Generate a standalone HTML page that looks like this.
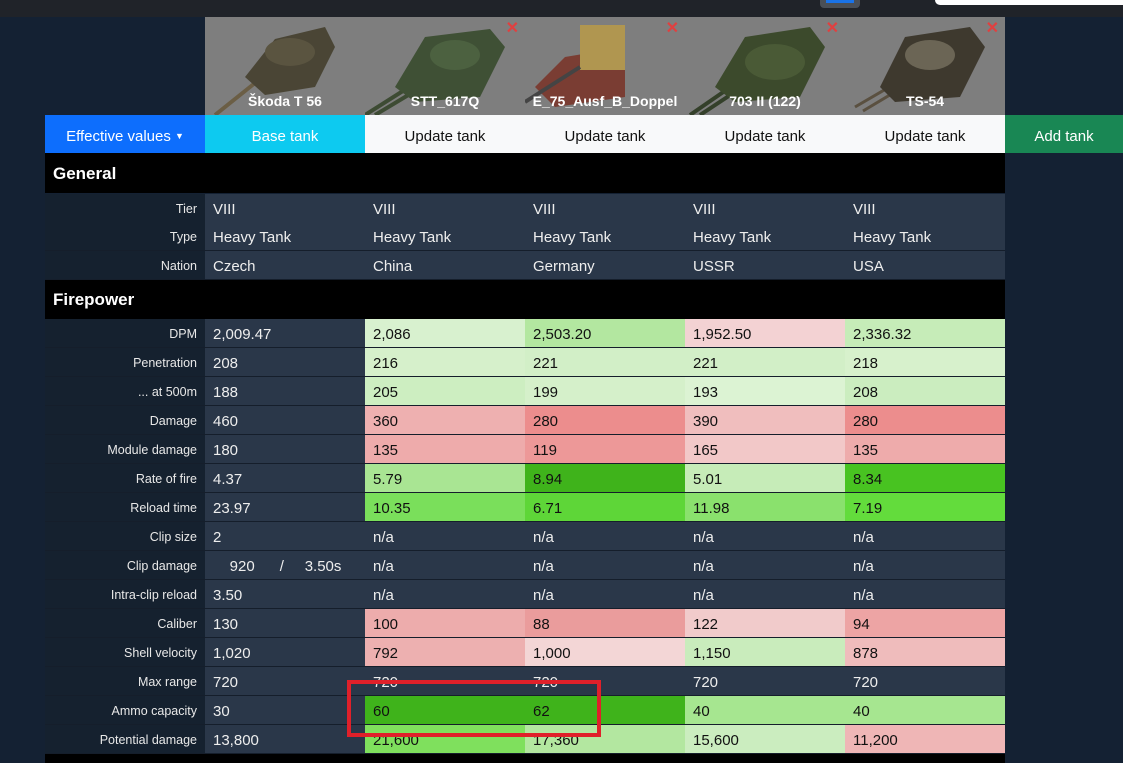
<!DOCTYPE html>
<html><head><meta charset="utf-8">
<style>
*{margin:0;padding:0;box-sizing:border-box}
body{width:1123px;height:763px;overflow:hidden;background:#142133;font-family:"Liberation Sans",sans-serif;position:relative}
.top{position:absolute;left:0;top:0;width:1123px;height:17px;background:#202329}
.tab{position:absolute;left:820px;top:0;width:40px;height:8px;background:#4a4f57;border-radius:0 0 4px 4px}
.tab i{position:absolute;left:6px;top:0;width:28px;height:3px;background:#1a73e8}
.srch{position:absolute;left:935px;top:0;width:188px;height:5px;background:#fff;border-radius:0 0 0 6px}
.img{position:absolute;top:17px;height:98px;width:160px;background:#7e7e7e;overflow:hidden}
.img .nm{position:absolute;left:0;right:0;bottom:6px;text-align:center;color:#fff;font-weight:bold;font-size:14px}
.img .x{position:absolute;right:6px;top:4px;color:#e04040;font-size:16px;font-weight:bold;line-height:16px}
.btn{position:absolute;top:115px;height:38px;width:160px;text-align:center;line-height:43px;font-size:15px}
.sec{position:absolute;left:45px;width:960px;height:40px;background:#000;color:#fff;font-weight:bold;font-size:17px;line-height:42px;padding-left:8px}
.row{position:absolute;left:45px;width:960px;height:29px;border-bottom:1px solid #151e2b}
.row div{position:absolute;top:0;height:28px;line-height:31px}
.lb{left:0;width:160px;background:#15212f;color:#e8e8e8;font-size:12.5px;text-align:right;padding-right:8px}
.c{width:160px;background:#2a3749;color:#eee;font-size:15px;padding-left:8px}
.c.k{color:#111}
</style></head><body>
<div class="top"></div><div class="tab"><i></i></div><div class="srch"></div>

<div class="img" style="left:205px"><svg width="160" height="98"><path d="M10 98 L70 50" stroke="#6b5e45" stroke-width="4"/><path d="M40 60 L70 22 L120 10 L130 30 L110 70 L60 78 Z" fill="#4a4535"/><ellipse cx="85" cy="35" rx="25" ry="14" fill="#5a5440"/></svg><div class="nm">Škoda T 56</div></div>
<div class="img" style="left:365px"><svg width="160" height="98"><path d="M0 98 L60 60 M10 98 L65 65" stroke="#3d4b33" stroke-width="4"/><path d="M30 70 L60 20 L125 12 L140 30 L115 80 L50 85 Z" fill="#3f5035"/><ellipse cx="90" cy="38" rx="25" ry="15" fill="#4c6140"/></svg><div class="nm">STT_617Q</div><div class="x">✕</div></div>
<div class="img" style="left:525px"><svg width="160" height="98"><path d="M10 70 L40 40 L100 30 L100 80 L30 90 Z" fill="#7a3d33"/><rect x="55" y="8" width="45" height="45" fill="#b09650"/><path d="M0 85 L55 50" stroke="#444" stroke-width="4"/></svg><div class="nm">E_75_Ausf_B_Doppel</div><div class="x">✕</div></div>
<div class="img" style="left:685px"><svg width="160" height="98"><path d="M5 98 L60 60 M15 98 L65 65" stroke="#34402a" stroke-width="4"/><path d="M30 70 L60 20 L125 10 L140 30 L115 80 L50 85 Z" fill="#3c4a2c"/><ellipse cx="90" cy="45" rx="30" ry="18" fill="#4a5a36"/></svg><div class="nm">703 II (122)</div><div class="x">✕</div></div>
<div class="img" style="left:845px"><svg width="160" height="98"><path d="M10 90 L70 55 M18 94 L75 60" stroke="#5a5040" stroke-width="3"/><path d="M35 70 L60 20 L125 10 L140 30 L115 80 L50 85 Z" fill="#3e392e"/><ellipse cx="85" cy="38" rx="25" ry="15" fill="#6b6555"/></svg><div class="nm">TS-54</div><div class="x">✕</div></div>

<div class="btn" style="left:45px;background:#0d6efd;color:#fff">Effective values <span style="font-size:9px;vertical-align:2px">▼</span></div>
<div class="btn" style="left:205px;background:#0dcaf0;color:#fff">Base tank</div>
<div class="btn" style="left:365px;background:#f8f9fa;color:#111">Update tank</div>
<div class="btn" style="left:525px;background:#f8f9fa;color:#111">Update tank</div>
<div class="btn" style="left:685px;background:#f8f9fa;color:#111">Update tank</div>
<div class="btn" style="left:845px;background:#f8f9fa;color:#111">Update tank</div>
<div class="btn" style="left:1005px;width:118px;background:#198754;color:#fff">Add tank</div>

<div class="sec" style="top:153px">General</div>
<div class="sec" style="top:279px">Firepower</div>
<div style="position:absolute;left:45px;top:753px;width:960px;height:10px;background:#000"></div>

<div id="rows"></div>
<div style="position:absolute;left:347px;top:680px;width:254px;height:57px;border:4px solid #e0202a"></div>
<script>
const R=[
[194,"Tier",["VIII","VIII","VIII","VIII","VIII"],[]],
[222,"Type",["Heavy Tank","Heavy Tank","Heavy Tank","Heavy Tank","Heavy Tank"],[]],
[251,"Nation",["Czech","China","Germany","USSR","USA"],[]],
[319,"DPM",["2,009.47","2,086","2,503.20","1,952.50","2,336.32"],["#d8f1cf","#b3e7a0","#f3d2d3","#c6ecb8"]],
[348,"Penetration",["208","216","221","221","218"],["#d6f0cb","#d2efc7","#d2efc7","#d7f1cc"]],
[377,"... at 500m",["188","205","199","193","208"],["#cdeec1","#d5f0ca","#dcf3d3","#cbedbf"]],
[406,"Damage",["460","360","280","390","280"],["#eeb0b0","#ec8d8d","#f0bebe","#ec8d8d"]],
[435,"Module damage",["180","135","119","165","135"],["#eeabab","#ed9898","#f2c8c8","#eeabab"]],
[464,"Rate of fire",["4.37","5.79","8.94","5.01","8.34"],["#a9e593","#3fb31b","#c6ecb8","#48c321"]],
[493,"Reload time",["23.97","10.35","6.71","11.98","7.19"],["#7adf5b","#5ed638","#8ae16d","#63dc3c"]],
[522,"Clip size",["2","n/a","n/a","n/a","n/a"],[]],
[551,"Clip damage",["&nbsp;&nbsp;&nbsp;&nbsp;920&nbsp;&nbsp;&nbsp;&nbsp;&nbsp;&nbsp;/&nbsp;&nbsp;&nbsp;&nbsp;&nbsp;3.50s","n/a","n/a","n/a","n/a"],[]],
[580,"Intra-clip reload",["3.50","n/a","n/a","n/a","n/a"],[]],
[609,"Caliber",["130","100","88","122","94"],["#edacac","#ea9c9c","#f1cbcb","#eda4a4"]],
[638,"Shell velocity",["1,020","792","1,000","1,150","878"],["#edb0b0","#f3d6d6","#c9ecbc","#efbcbc"]],
[667,"Max range",["720","720","720","720","720"],[]],
[696,"Ammo capacity",["30","60","62","40","40"],["#3fb31b","#3fb31b","#a6e690","#a6e690"]],
[725,"Potential damage",["13,800","21,600","17,360","15,600","11,200"],["#7fe05d","#b3e7a0","#cbedbf","#efb6b6"]]
];
let h="";
for(const [t,l,v,c] of R){
 h+=`<div class="row" style="top:${t}px"><div class="lb">${l}</div>`;
 v.forEach((x,i)=>{const col=i>0&&c.length?c[i-1]:null;
  h+=`<div class="c${col?' k':''}" style="left:${160+i*160}px${col?';background:'+col:''}">${x}</div>`});
 h+="</div>";
}
document.getElementById("rows").innerHTML=h;
</script>
</body></html>
